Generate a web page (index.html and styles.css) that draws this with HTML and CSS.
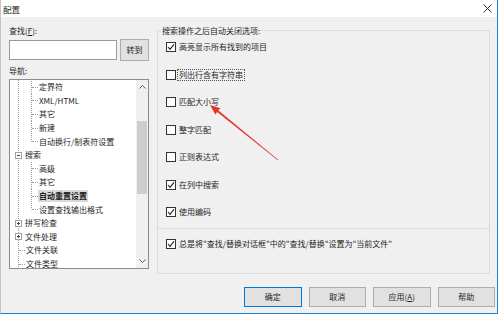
FILE: index.html
```html
<!DOCTYPE html>
<html>
<head>
  <meta charset="utf-8">
  <title>配置</title>
  <link rel="stylesheet" href="styles.css">
</head>
<body>

<div class="window">
  <div class="titlebar">
    <span class="title">配置</span>
    <svg class="close" width="9" height="9" viewBox="0 0 9 9"><path d="M0.5 0.5L8.5 8.5M8.5 0.5L0.5 8.5" stroke="#333" stroke-width="1"/></svg>
  </div>

  <div class="main">
    <div class="left">
      <div class="label">查找(<u>F</u>):</div>
      <div class="find-row">
        <input class="find-input" type="text">
        <button class="btn go">转到</button>
      </div>
      <div class="label nav-label">导航:</div>
      <div class="tree">
        <div class="tree-list">
          <div class="row child">定界符</div>
          <div class="row child">XML/HTML</div>
          <div class="row child">其它</div>
          <div class="row child">新建</div>
          <div class="row child last">自动换行/制表符设置</div>
          <div class="row top boxed"><span class="box"></span>搜索</div>
          <div class="row child">高级</div>
          <div class="row child">其它</div>
          <div class="row child"><span class="sel">自动重置设置</span></div>
          <div class="row child last">设置查找输出格式</div>
          <div class="row top boxed"><span class="box plus"></span>拼写检查</div>
          <div class="row top boxed"><span class="box plus"></span>文件处理</div>
          <div class="row top">文件关联</div>
          <div class="row top">文件类型</div>
        </div>
        <div class="scrollbar">
          <div class="sb-arrow"><svg width="7" height="4" viewBox="0 0 7 4"><path d="M0.5 3.5L3.5 0.5L6.5 3.5" fill="none" stroke="#606060"/></svg></div>
          <div class="sb-track"><div class="sb-thumb"></div></div>
          <div class="sb-arrow"><svg width="7" height="4" viewBox="0 0 7 4"><path d="M0.5 0.5L3.5 3.5L6.5 0.5" fill="none" stroke="#606060"/></svg></div>
        </div>
      </div>
    </div>

    <fieldset class="group">
      <legend>搜索操作之后自动关闭选项:</legend>
      <div class="opts">
        <div class="opt"><span class="check on"></span>高亮显示所有找到的项目</div>
        <div class="opt"><span class="check"></span><span class="focus">列出行含有字符串</span></div>
        <div class="opt"><span class="check"></span>匹配大小写</div>
        <div class="opt"><span class="check"></span>整字匹配</div>
        <div class="opt"><span class="check"></span>正则表达式</div>
        <div class="opt"><span class="check on"></span>在列中搜索</div>
        <div class="opt"><span class="check on"></span>使用编码</div>
      </div>
      <div class="sep"></div>
      <div class="opt last-opt"><span class="check on"></span>总是将"查找/替换对话框"中的"查找/替换"设置为"当前文件"</div>
    </fieldset>
  </div>

  <div class="buttons">
    <button class="btn default">确定</button>
    <button class="btn">取消</button>
    <button class="btn">应用(<u>A</u>)</button>
    <button class="btn">帮助</button>
  </div>

  <!-- red annotation arrow -->
  <svg class="arrow" width="500" height="316" viewBox="0 0 500 316">
    <polygon points="210,105 220.3,108.2 218.4,110.5 278.2,159.8 277.8,160.2 217.2,112.1 215.3,114.4" fill="#e8332b"/>
  </svg>
</div>

</body>
</html>
```

FILE: styles.css
```css
* {
  box-sizing: border-box;
}
body {
  margin: 0;
  background: #fff;
  font-family: "Noto Sans CJK SC", "Liberation Sans", sans-serif;
  font-size: 8px;
  color: #1e1e1e;
}
.window {
  position: relative;
  width: 498px;
  height: 314px;
  background: #f0f0f0;
  border-left: 1px solid #c5c5c5;
  border-right: 1px solid #1883d7;
  border-bottom: 1px solid #1883d7;
}
.titlebar {
  height: 17px;
  background: #fff;
  display: flex;
  align-items: center;
  justify-content: space-between;
  padding: 0 5px 0 2px;
}
.title {
  font-size: 8.5px;
  line-height: 10px;
}
.main {
  display: flex;
  gap: 8px;
  padding: 9px 7px 0 8px;
}
.left {
  width: 140px;
}
.label {
  line-height: 10px;
  height: 10px;
}
.find-row {
  display: flex;
  align-items: center;
  gap: 3px;
  height: 20px;
  margin-top: 4px;
}
.find-input {
  width: 108px;
  height: 20px;
  border: 1px solid #9a9a9a;
  background: #fff;
  margin: 0;
}
.btn {
  margin: 0;
  padding: 0;
  width: 57.5px;
  height: 20px;
  background: #e1e1e1;
  border: 1px solid #adadad;
  font-family: inherit;
  font-size: 8px;
  line-height: 10px;
  color: #1e1e1e;
}
.btn.go {
  width: 29px;
  height: 22px;
}
.btn.default {
  border-color: #0078d7;
}
.nav-label {
  margin-top: 6px;
}
.tree {
  display: flex;
  height: 190px;
  margin-top: 3px;
  border: 1px solid #8c8c8c;
  background: #fff;
}
.tree-list {
  flex: 1;
  overflow: hidden;
  padding-top: 0.5px;
  background: repeating-linear-gradient(#a0a0a0 0 1px, transparent 1px 2px) 8px 0 / 1px 100% no-repeat;
}
.row {
  display: flex;
  align-items: center;
  height: 13.6px;
  line-height: 10px;
  white-space: nowrap;
}
.row::before {
  content: "";
  width: 6px;
  height: 0;
  border-top: 1px dotted #a0a0a0;
  margin-right: 1px;
}
.child {
  background: repeating-linear-gradient(#a0a0a0 0 1px, transparent 1px 2px) 21px 0 / 1px 100% no-repeat;
}
.child::before {
  margin-left: 22px;
}
.child.last {
  background-size: 1px 50%;
}
.top::before {
  margin-left: 9px;
}
.boxed::before {
  display: none;
}
.box {
  position: relative;
  display: flex;
  align-items: center;
  justify-content: center;
  width: 7px;
  height: 7px;
  margin: 0 3px 0 5px;
  border: 1px solid #a0a0a0;
  background: #fff;
}
.box::before {
  content: "";
  width: 3px;
  height: 1px;
  background: #444;
}
.box.plus::after {
  content: "";
  position: absolute;
  left: 2px;
  top: 1px;
  width: 1px;
  height: 3px;
  background: #444;
}
.sel {
  background: #dadada;
  font-weight: bold;
  padding: 1px 1px;
  margin-left: -1px;
}
.scrollbar {
  width: 12px;
  display: flex;
  flex-direction: column;
  background: #f0f0f0;
}
.sb-arrow {
  height: 14px;
  display: flex;
  align-items: center;
  justify-content: center;
}
.sb-track {
  flex: 1;
  padding: 0 1px;
}
.sb-thumb {
  margin-top: 27px;
  height: 73px;
  background: #cdcdcd;
}
.group {
  width: 333px;
  height: 248px;
  margin: 0;
  padding: 0;
  min-width: 0;
  border: 1px solid #dcdcdc;
}
.group legend {
  margin-left: 3px;
  padding: 0 1px;
  line-height: 9px;
  font-size: 8px;
}
.opts {
  display: flex;
  flex-direction: column;
  gap: 11.5px;
  padding-top: 4px;
}
.opt {
  display: flex;
  align-items: center;
  height: 16px;
  padding-left: 8px;
  line-height: 10px;
  white-space: nowrap;
}
.check {
  width: 10px;
  height: 10px;
  margin-right: 3px;
  border: 1px solid #333;
  background: #fff;
}
.check.on {
  background: #fff url("data:image/svg+xml;utf8,<svg xmlns='http://www.w3.org/2000/svg' width='8' height='8' viewBox='0 0 8 8'><path d='M1 4L3 6.3L7 1.3' fill='none' stroke='%23222' stroke-width='1.1'/></svg>") center / 8px 8px no-repeat;
}
.focus {
  outline: 1px dotted #555;
  outline-offset: 0;
  padding: 0 1px;
  margin-left: -1px;
}
.sep {
  height: 1px;
  margin-top: 8px;
  background: #dcdcdc;
}
.last-opt {
  margin-top: 7px;
}
.buttons {
  display: flex;
  justify-content: flex-end;
  gap: 7px;
  margin-top: 13px;
  padding-right: 2px;
}
.arrow {
  position: absolute;
  left: -1px;
  top: 0;
  pointer-events: none;
}
```
